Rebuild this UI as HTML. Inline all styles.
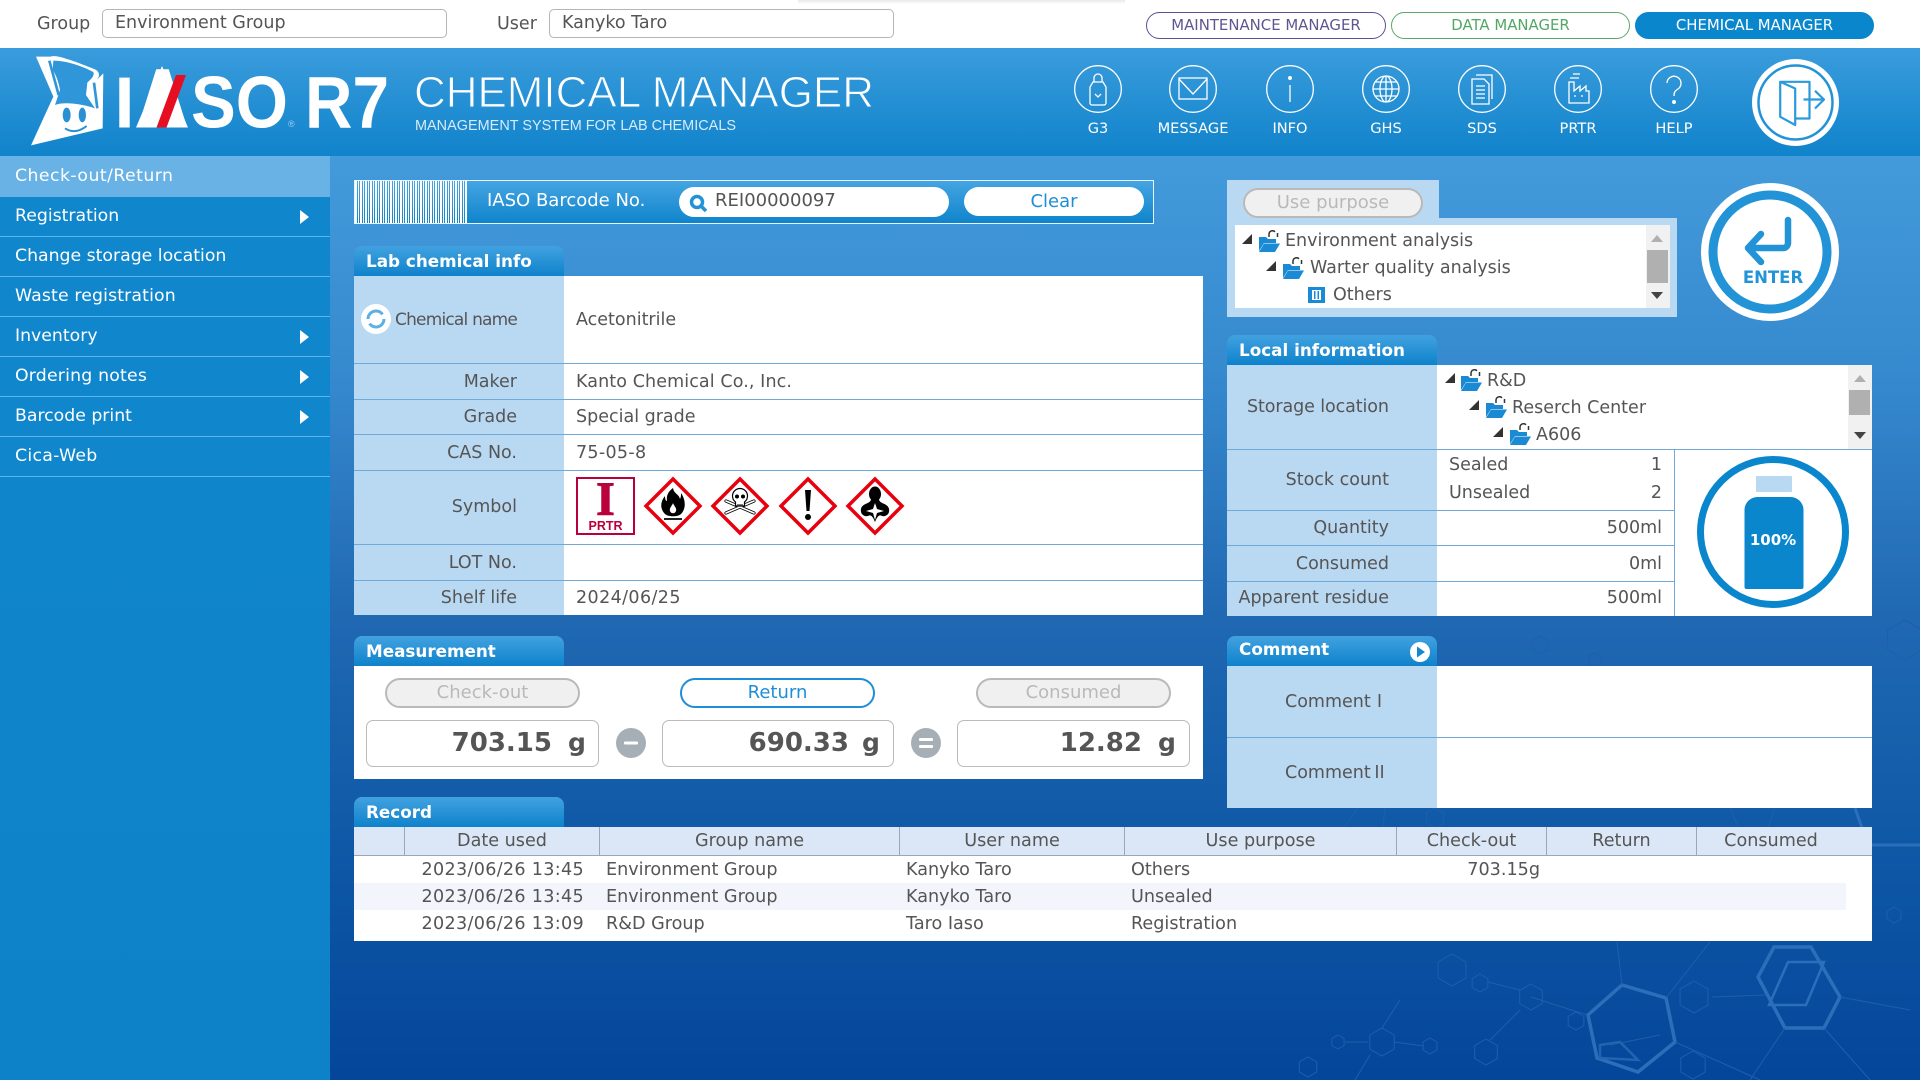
<!DOCTYPE html>
<html lang="en">
<head>
<meta charset="utf-8">
<title>IASO R7 Chemical Manager</title>
<style>
html,body{margin:0;padding:0;width:1920px;height:1080px;overflow:hidden;background:#fff}
body{position:relative;font-family:"DejaVu Sans","Liberation Sans","Noto Sans CJK JP",sans-serif;font-size:17.500px;color:#555}
div,span,svg{box-sizing:border-box}
.a{position:absolute}
.t{position:absolute;white-space:nowrap;line-height:30px;height:30px;margin-top:1px}
.r{text-align:right}
.c{text-align:center}
.inp{position:absolute;background:#fff;border:1px solid #b5b5b5;border-radius:5px}
.pill{position:absolute;border-radius:14px;text-align:center;font-size:14.900px;line-height:25px;height:27px;border:1px solid}
.hi{position:absolute;top:65px;width:48px;height:48px}
.hl{position:absolute;top:119px;width:100px;text-align:center;color:#fff;font-size:14.600px;line-height:20px}
.m{position:absolute;left:0;width:330px;height:40px;background:#1087cd;border-bottom:1px solid #5ab5ee;color:#fff;font-size:17.300px;line-height:38px;padding-left:15px;white-space:nowrap}
.ar{position:absolute;left:300px;width:0;height:0;border-left:9px solid #fff;border-top:7px solid transparent;border-bottom:7px solid transparent}
.tab{position:absolute;height:30px;border-radius:8px 8px 0 0;background:linear-gradient(#42a2e0,#0e82cb);color:#fff;font-weight:700;font-size:16.800px;line-height:30px;padding-left:12px;white-space:nowrap}
.lab{position:absolute;background:#b9d8f2}
.wh{position:absolute;background:#fff}
.ln{position:absolute;height:1px;background:#6ea9da}
.vl{position:absolute;width:1px;background:#6ea9da}
.btn{position:absolute;height:30px;border-radius:15px;text-align:center;line-height:26px;border:2px solid #b9b9b9;background:#f0f0f0;color:#b9b9b9;font-size:18px}
.val{position:absolute;top:720px;height:47px;background:#fff;border:1px solid #bbb;border-radius:7px}
.big{position:absolute;top:728px;font-weight:700;font-size:26px;line-height:30px;color:#555;white-space:nowrap}
.th{position:absolute;top:827px;height:28px;line-height:28px;text-align:center;color:#555;font-size:17.600px;white-space:nowrap}
.sep{position:absolute;top:827px;height:28px;width:1px;background:#9aa7b5}
.td{position:absolute;height:27px;line-height:27px;color:#555;font-size:17.600px;white-space:nowrap;margin-top:1px}
.dt{letter-spacing:.3px}
.up{position:absolute;width:0;height:0;border-left:6px solid transparent;border-right:6px solid transparent;border-bottom:7px solid #b0b0b0}
.dn{position:absolute;width:0;height:0;border-left:6px solid transparent;border-right:6px solid transparent;border-top:7px solid #444}
.tri{position:absolute;width:0;height:0;border-bottom:10px solid #333;border-left:10px solid transparent}
.rn{font-family:"Noto Sans CJK JP",sans-serif}
</style>
</head>
<body>
<svg width="0" height="0" style="position:absolute">
  <defs>
    <symbol id="fo" viewBox="0 0 22 22">
      <path d="M1 7h7l2 2h8v4H6L1 21z" fill="#1a8ad4"/>
      <path d="M6 13.500H22L17 22H1z" fill="#1a8ad4"/>
      <path d="M11 7V4a3.500 3.500 0 0 1 6-2.200M19.500 3v4" fill="none" stroke="#333" stroke-width="1.500"/>
    </symbol>
    <polygon id="hx" points="0,-10 8.700,-5 8.700,5 0,10 -8.700,5 -8.700,-5" vector-effect="non-scaling-stroke"/>
  </defs>
</svg>

<!-- main background -->
<div class="a" style="left:0;top:156px;width:1920px;height:924px;background:linear-gradient(#439bdb 0%,#3588cd 25%,#2068b2 50%,#105aa8 72%,#04469a 100%)"></div>

<!-- molecules -->
<svg class="a" style="left:0;top:0" width="1920" height="1080" fill="none" stroke="#2b6fba">
  <g stroke-width="3.500">
    <polygon points="1622,985 1666,998 1675,1042 1638,1072 1597,1058 1588,1015"/>
    <polygon points="1774,947 1811,947 1840,997 1824,1028 1785,1028 1758,977"/>
  </g>
  <g stroke-width="2.500">
    <polygon points="1788,962 1824,962 1806,1005 1769,1005"/>
    <polygon points="1600,1045 1620,1042 1638,1060 1600,1058" stroke="#2463b0"/>
  </g>
  <g stroke-width="1" stroke="#1f5fac">
    <path d="M1622 985L1617 942M1666 998L1710 942M1531 997L1587 1015M1488 982L1520 990M1712 997L1765 995M1840 997L1910 1010M1785 1028L1750 1080M1824 1028L1870 1080M1675 1042L1760 1080M1520 1010L1490 1040M1394 1042L1424 1046M1382 1028L1400 1000M1370 1055L1355 1080M1368 1042L1345 1042M1345 827L1358 808M1385 808L1383 827M1730 808L1738 827M1775 808L1768 827M1610 1045L1660 1035"/>
    <path d="M1855 808L1868 845H1920" stroke-width="3" stroke="#2b6fba"/>
    <use href="#hx" transform="translate(1452 970) scale(1.600)"/>
    <use href="#hx" transform="translate(1480 983) scale(.9)"/>
    <use href="#hx" transform="translate(1531 997) scale(1.300)"/>
    <use href="#hx" transform="translate(1694 997) scale(1.600)"/>
    <use href="#hx" transform="translate(1576 1021) scale(.9)"/>
    <use href="#hx" transform="translate(1486 1052) scale(1.300)"/>
    <use href="#hx" transform="translate(1382 1042) scale(1.400)"/>
    <use href="#hx" transform="translate(1430 1046) scale(.8)"/>
    <use href="#hx" transform="translate(1338 1042) scale(.7)"/>
    <use href="#hx" transform="translate(1308 1067) scale(1)"/>
    <use href="#hx" transform="translate(1693 1065) scale(1.400)"/>
    <use href="#hx" transform="translate(1894 915) scale(.8)"/>
    <use href="#hx" transform="translate(1435 818) scale(1)"/>
    <use href="#hx" transform="translate(1540 645) scale(.9)"/>
    <use href="#hx" transform="translate(1595 660) scale(.7)"/>
    <use href="#hx" transform="translate(1905 640) scale(2)"/>
  </g>
</svg>

<!-- top bar -->
<div class="a" style="left:798px;top:0;width:327px;height:4px;background:linear-gradient(#e8e8e8,#fff)"></div>
<div class="t" style="left:37px;top:8px">Group</div>
<div class="inp" style="left:102px;top:9px;width:345px;height:29px"></div>
<div class="t" style="left:115px;top:7px">Environment Group</div>
<div class="t" style="left:497px;top:8px">User</div>
<div class="inp" style="left:549px;top:9px;width:345px;height:29px"></div>
<div class="t" style="left:562px;top:7px">Kanyko Taro</div>
<div class="pill" style="left:1146px;top:12px;width:240px;border-color:#5c4f92;color:#5f5590">MAINTENANCE MANAGER</div>
<div class="pill" style="left:1391px;top:12px;width:239px;border-color:#5aa86a;color:#52a763">DATA MANAGER</div>
<div class="pill" style="left:1635px;top:12px;width:239px;border-color:#0986cc;background:#0986cc;color:#fff">CHEMICAL MANAGER</div>

<!-- header -->
<div class="a" style="left:0;top:48px;width:1920px;height:108px;background:linear-gradient(#3a9cdc,#1083cb)"></div>
<svg class="a" style="left:0;top:0" width="900" height="160">
  <g transform="translate(0 40) scale(.3333)">
    <path fill="#fff" d="M108 50L152 50C165 45 190 50 285 88C300 95 300 110 290 120L310 100L308 265L93 316L160 170Z"/>
    <path fill="#2f96d9" d="M160 62C200 62 250 80 280 96C285 108 272 118 262 128L258 165L285 205C240 190 190 185 165 195L180 150C175 120 165 100 158 90Z"/>
    <path d="M148 62L176 165M282 128L292 205" stroke="#2f96d9" stroke-width="8" fill="none"/>
    <ellipse cx="200" cy="225" rx="12" ry="22" fill="#2a90d4"/>
    <ellipse cx="247" cy="225" rx="11" ry="22" fill="#2a90d4"/>
    <path d="M195 265Q225 285 260 258" stroke="#2a90d4" stroke-width="6" fill="none"/>
  </g>
  <polygon points="162,66 188,127.500 136,127.500" fill="#fff"/>
  <g fill="#fff" font-family="'Liberation Sans',sans-serif" font-weight="700">
    <text x="114.500" y="127.500" font-size="72" textLength="20" lengthAdjust="spacingAndGlyphs">I</text>
    <text x="136" y="127.500" font-size="84" textLength="53" lengthAdjust="spacingAndGlyphs">A</text>
    <text x="191" y="127.500" font-size="73" textLength="97" lengthAdjust="spacingAndGlyphs">SO</text>
    <text x="305" y="127.500" font-size="73" textLength="84" lengthAdjust="spacingAndGlyphs">R7</text>
    <text x="288" y="127" font-size="9" font-weight="400" fill="#9ed0ef">®</text>
  </g>
  <polygon points="176,75 186,75 166.500,127.500 156.500,127.500" fill="#e60f22"/>
  <text x="414" y="107" font-family="'Liberation Sans',sans-serif" font-size="44" fill="#fff" stroke="#2b94d7" stroke-width="1" textLength="460" lengthAdjust="spacingAndGlyphs">CHEMICAL MANAGER</text>
  <text x="415" y="130" font-family="'Liberation Sans',sans-serif" font-size="14.500" fill="#d7ecf9" textLength="321" lengthAdjust="spacingAndGlyphs">MANAGEMENT SYSTEM FOR LAB CHEMICALS</text>
</svg>

<!-- header icons -->
<svg class="hi" style="left:1074px" viewBox="0 0 48 48" fill="none" stroke="#fff" stroke-width="1.300"><circle cx="24" cy="24" r="23.300"/><path d="M20 17V13a4 4 0 0 1 8 0V17M19 17h10l3 5V38a2 2 0 0 1-2 2H18a2 2 0 0 1-2-2V22zM21 29l3 3 3-3"/></svg>
<svg class="hi" style="left:1169px" viewBox="0 0 48 48" fill="none" stroke="#fff" stroke-width="1.300"><circle cx="24" cy="24" r="23.300"/><rect x="10" y="13" width="28" height="21"/><path d="M10 14L24 29 38 14"/></svg>
<svg class="hi" style="left:1266px" viewBox="0 0 48 48" fill="none" stroke="#fff" stroke-width="1.300"><circle cx="24" cy="24" r="23.300"/><path d="M24 20V37"/><circle cx="24" cy="13" r="1.300" fill="#fff"/></svg>
<svg class="hi" style="left:1362px" viewBox="0 0 48 48" fill="none" stroke="#fff" stroke-width="1.300"><circle cx="24" cy="24" r="23.300"/><circle cx="24" cy="24" r="13"/><ellipse cx="24" cy="24" rx="6" ry="13"/><path d="M11 24h26M13.500 17h21M13.500 31h21M24 11v26"/></svg>
<svg class="hi" style="left:1458px" viewBox="0 0 48 48" fill="none" stroke="#fff" stroke-width="1.300"><circle cx="24" cy="24" r="23.300"/><path d="M18 10h16v24M14 14v25h17V19l-5-5zM14 14h12M18 21h9M18 25h9M18 29h9M18 33h9"/></svg>
<svg class="hi" style="left:1554px" viewBox="0 0 48 48" fill="none" stroke="#fff" stroke-width="1.300"><circle cx="24" cy="24" r="23.300"/><path d="M15 38V17h5v9l6-5v5l6-5v5l3 0V38zM16 13h9M19 9h7M20 31h2M27 31h2"/></svg>
<svg class="hi" style="left:1650px" viewBox="0 0 48 48" fill="none" stroke="#fff" stroke-width="1.300"><circle cx="24" cy="24" r="23.300"/><path d="M17 18a7 7 0 1 1 11 6c-3 2-4 3-4 7"/><circle cx="24" cy="37" r="1.300" fill="#fff"/></svg>
<div class="hl" style="left:1048px">G3</div>
<div class="hl" style="left:1143px">MESSAGE</div>
<div class="hl" style="left:1240px">INFO</div>
<div class="hl" style="left:1336px">GHS</div>
<div class="hl" style="left:1432px">SDS</div>
<div class="hl" style="left:1528px">PRTR</div>
<div class="hl" style="left:1624px">HELP</div>
<svg class="a" style="left:1752px;top:59px" width="87" height="87" viewBox="0 0 87 87">
  <circle cx="43.500" cy="43.500" r="43.500" fill="#fff"/>
  <circle cx="43.500" cy="43.500" r="37" fill="none" stroke="#2293d6" stroke-width="2.500"/>
  <g fill="none" stroke="#2a9ada" stroke-width="2.200" stroke-linejoin="round">
    <path d="M43 59.500H57.500V22.800H28.200V57.800L43.200 66V29.500L28.200 22.800M51.500 40.500H72M63 31.800L72 40.500 63 49.500"/>
  </g>
</svg>

<!-- sidebar -->
<div class="a" style="left:0;top:156px;width:330px;height:924px;background:linear-gradient(#1087cd,#0e82c8)"></div>
<div class="m" style="top:156px;height:41px;background:#68b2e6;border:0;line-height:40px;letter-spacing:.45px">Check-out/Return</div>
<div class="m" style="top:197px">Registration</div><div class="ar" style="top:210px"></div>
<div class="m" style="top:237px">Change storage location</div>
<div class="m" style="top:277px;letter-spacing:.15px">Waste registration</div>
<div class="m" style="top:317px">Inventory</div><div class="ar" style="top:330px"></div>
<div class="m" style="top:357px;letter-spacing:.2px">Ordering notes</div><div class="ar" style="top:370px"></div>
<div class="m" style="top:397px">Barcode print</div><div class="ar" style="top:410px"></div>
<div class="m" style="top:437px;letter-spacing:.3px">Cica-Web</div>

<!-- barcode -->
<div class="a" style="left:354px;top:180px;width:800px;height:44px;border:1px solid #e8f4fc;background:linear-gradient(#45a5e2,#0f84cc)"></div>
<div class="a" style="left:355px;top:181px;width:113px;height:42px;background:repeating-linear-gradient(90deg,#fff 0,#fff 2px,transparent 2px,transparent 3px,#fff 3px,#fff 4px,transparent 4px,transparent 5px,#fff 5px,#fff 7px,transparent 7px,transparent 8px,#fff 8px,#fff 9px,transparent 9px,transparent 10px)"></div>
<div class="t" style="left:487px;top:185px;color:#fff;font-size:18px">IASO Barcode No.</div>
<div class="a" style="left:679px;top:187px;width:270px;height:30px;background:#fff;border-radius:15px"></div>
<svg class="a" style="left:688px;top:193px" width="20" height="20" fill="none" stroke="#2293d6" stroke-width="3.500"><circle cx="9" cy="9" r="5.500"/><path d="M13 13l5 5"/></svg>
<div class="t" style="left:715px;top:185px;font-size:18px">REI00000097</div>
<div class="a" style="left:964px;top:187px;width:180px;height:29px;background:#fff;border-radius:15px;text-align:center;color:#1e8fd6;line-height:30px;font-size:18px">Clear</div>

<!-- Lab chemical info -->
<div class="tab" style="left:354px;top:246px;width:210px">Lab chemical info</div>
<div class="lab" style="left:354px;top:276px;width:210px;height:339px"></div>
<div class="wh" style="left:564px;top:276px;width:639px;height:339px"></div>
<div class="ln" style="left:354px;top:363px;width:849px"></div>
<div class="ln" style="left:354px;top:399px;width:849px"></div>
<div class="ln" style="left:354px;top:434px;width:849px"></div>
<div class="ln" style="left:354px;top:470px;width:849px"></div>
<div class="ln" style="left:354px;top:544px;width:849px"></div>
<div class="ln" style="left:354px;top:580px;width:849px"></div>
<svg class="a" style="left:361px;top:304px" width="30" height="30"><circle cx="15" cy="15" r="15" fill="#fff"/><circle cx="15" cy="15" r="8" fill="none" stroke="#5cb0e4" stroke-width="3" stroke-dasharray="20 5"/></svg>
<div class="t" style="left:395px;top:304px;font-size:17px;letter-spacing:-.8px">Chemical name</div>
<div class="t r" style="right:1403px;top:366px">Maker</div>
<div class="t r" style="right:1403px;top:401px">Grade</div>
<div class="t r" style="right:1403px;top:437px">CAS No.</div>
<div class="t r" style="right:1403px;top:491px">Symbol</div>
<div class="t r" style="right:1403px;top:547px">LOT No.</div>
<div class="t r" style="right:1403px;top:582px">Shelf life</div>
<div class="t" style="left:576px;top:304px">Acetonitrile</div>
<div class="t" style="left:576px;top:366px;letter-spacing:.1px">Kanto Chemical Co., Inc.</div>
<div class="t" style="left:576px;top:401px">Special grade</div>
<div class="t" style="left:576px;top:437px;letter-spacing:.3px">75-05-8</div>
<div class="t" style="left:576px;top:582px;letter-spacing:.4px">2024/06/25</div>

<!-- symbols -->
<div class="a" style="left:576px;top:477px;width:59px;height:58px;border:2.500px solid #b9003c;background:#fff"></div>
<div class="a" style="left:576px;top:480px;width:59px;text-align:center;font-family:'Liberation Serif',serif;font-weight:700;font-size:48px;line-height:40px;color:#b9003c;-webkit-text-stroke:1px #b9003c">I</div>
<div class="a" style="left:576px;top:519px;width:59px;text-align:center;font-family:'Liberation Sans',sans-serif;font-weight:700;font-size:12.500px;line-height:14px;color:#b9003c">PRTR</div>
<svg class="a" style="left:643px;top:476px" width="60" height="60" viewBox="0 0 60 60">
  <polygon points="30,3 57,30 30,57 3,30" fill="#fff" stroke="#e8000f" stroke-width="3.500"/>
  <path d="M30 12C31 18 36 18 37 23C38 21 38 20 38 17C43 24 43 33 38 38C35 41 25 41 22 38C17 33 17 26 22 20C22 24 23 25 24 25C23 19 26 15 30 12Z" fill="#000"/>
  <path d="M30 27C31 30 34 32 33 35C32 38 28 38 27 35C26 32 29 30 30 27Z" fill="#fff"/>
  <path d="M21 43h18" stroke="#000" stroke-width="1.800"/>
</svg>
<svg class="a" style="left:710px;top:476px" width="60" height="60" viewBox="0 0 60 60">
  <polygon points="30,3 57,30 30,57 3,30" fill="#fff" stroke="#e8000f" stroke-width="3.500"/>
  <path d="M16 25L44 37M44 25L16 37" stroke="#000" stroke-width="3.200" stroke-linecap="round"/>
  <path d="M16 25L44 37M44 25L16 37" stroke="#fff" stroke-width="1.600" stroke-linecap="round"/>
  <path d="M22.500 20a7.500 7.500 0 1 1 15 0c0 4-2 5-3 6v4h-9v-4c-1-1-3-2-3-6z" fill="#fff" stroke="#000" stroke-width="1.200"/>
  <circle cx="27" cy="20.500" r="2" fill="#000"/><circle cx="33" cy="20.500" r="2" fill="#000"/>
  <path d="M28 28v2M30 28v2M32 28v2" stroke="#000"/>
</svg>
<svg class="a" style="left:778px;top:476px" width="60" height="60" viewBox="0 0 60 60">
  <polygon points="30,3 57,30 30,57 3,30" fill="#fff" stroke="#e8000f" stroke-width="3.500"/>
  <path d="M27 14h6l-1.500 21h-3z" fill="#000"/><circle cx="30" cy="41" r="3" fill="#000"/>
</svg>
<svg class="a" style="left:845px;top:476px" width="60" height="60" viewBox="0 0 60 60">
  <polygon points="30,3 57,30 30,57 3,30" fill="#fff" stroke="#e8000f" stroke-width="3.500"/>
  <ellipse cx="30" cy="18" rx="6" ry="7.500" fill="#000"/>
  <path d="M26 23C26 28 17 27 16 33C15 38 19 41 23 40C26 38 28 41 30 46C32 41 34 38 37 40C41 41 45 38 44 33C43 27 34 28 34 23Z" fill="#000"/>
  <path d="M30 27l2 6 7 2-7 2-2 7-2-7-7-2 7-2z" fill="#fff"/>
</svg>

<!-- Measurement -->
<div class="tab" style="left:354px;top:636px;width:210px">Measurement</div>
<div class="wh" style="left:354px;top:666px;width:849px;height:113px"></div>
<div class="btn" style="left:385px;top:678px;width:195px">Check-out</div>
<div class="btn" style="left:680px;top:678px;width:195px;background:#fff;border-color:#1e8fd6;color:#1e8fd6">Return</div>
<div class="btn" style="left:976px;top:678px;width:195px">Consumed</div>
<div class="val" style="left:366px;width:233px"></div>
<div class="val" style="left:662px;width:232px"></div>
<div class="val" style="left:957px;width:233px"></div>
<div class="big r" style="right:1368px">703.15</div><div class="big" style="left:568px;font-size:25px">g</div>
<div class="big r" style="right:1071px">690.33</div><div class="big" style="left:862px;font-size:25px">g</div>
<div class="big r" style="right:778px">12.82</div><div class="big" style="left:1158px;font-size:25px">g</div>
<svg class="a" style="left:616px;top:728px" width="30" height="30"><circle cx="15" cy="15" r="15" fill="#a7afb6"/><rect x="8" y="13.500" width="14" height="3" rx="1" fill="#fff"/></svg>
<svg class="a" style="left:911px;top:728px" width="30" height="30"><circle cx="15" cy="15" r="15" fill="#a7afb6"/><rect x="8" y="10" width="14" height="3" rx="1" fill="#fff"/><rect x="8" y="17" width="14" height="3" rx="1" fill="#fff"/></svg>

<!-- Use purpose -->
<div class="a" style="left:1227px;top:180px;width:212px;height:40px;background:#b9d8f2"></div>
<div class="a" style="left:1227px;top:218px;width:450px;height:99px;background:#b9d8f2"></div>
<div class="btn" style="left:1243px;top:188px;width:180px">Use purpose</div>
<div class="wh" style="left:1235px;top:225px;width:435px;height:83px"></div>
<div class="a" style="left:1646px;top:225px;width:24px;height:83px;background:#f1f1f1"></div>
<div class="a" style="left:1647px;top:250px;width:21px;height:33px;background:#b0b0b0"></div>
<div class="up" style="left:1651px;top:235px"></div>
<div class="dn" style="left:1651px;top:292px"></div>
<div class="tri" style="left:1242px;top:234px"></div>
<svg class="a" style="left:1258px;top:230px" width="22" height="22"><use href="#fo"/></svg>
<div class="t" style="left:1285px;top:225px">Environment analysis</div>
<div class="tri" style="left:1266px;top:261px"></div>
<svg class="a" style="left:1282px;top:257px" width="22" height="22"><use href="#fo"/></svg>
<div class="t" style="left:1310px;top:252px">Warter quality analysis</div>
<div class="a" style="left:1308px;top:287px;width:17px;height:16px;background:#1a8ad4;color:#fff"></div>
<div class="a" style="left:1312px;top:290px;width:9px;height:10px;border-top:1.500px solid #fff;border-bottom:1.500px solid #fff;background:repeating-linear-gradient(90deg,#fff 0,#fff 2px,transparent 2px,transparent 3.500px)"></div>
<div class="t" style="left:1333px;top:279px">Others</div>

<!-- Enter -->
<svg class="a" style="left:1701px;top:183px" width="138" height="138" viewBox="0 0 138 138">
  <circle cx="69" cy="69" r="69" fill="#fff"/>
  <circle cx="69" cy="69" r="57" fill="#fff" stroke="#2293d6" stroke-width="9"/>
  <path d="M87 37V60a5 5 0 0 1-5 5H52" fill="none" stroke="#2293d6" stroke-width="6.500" stroke-linecap="round"/>
  <path d="M60 51L47 65 60 79" fill="none" stroke="#2293d6" stroke-width="6.500" stroke-linecap="round" stroke-linejoin="round"/>
</svg>
<div class="a c" style="left:1723px;top:267px;width:100px;color:#2293d6;font-weight:700;font-size:16.500px;line-height:22px">ENTER</div>

<!-- Local information -->
<div class="tab" style="left:1227px;top:335px;width:210px">Local information</div>
<div class="lab" style="left:1227px;top:365px;width:210px;height:251px"></div>
<div class="wh" style="left:1437px;top:365px;width:435px;height:251px"></div>
<div class="ln" style="left:1227px;top:449px;width:645px"></div>
<div class="ln" style="left:1227px;top:510px;width:448px"></div>
<div class="ln" style="left:1227px;top:545px;width:448px"></div>
<div class="ln" style="left:1227px;top:581px;width:448px"></div>
<div class="vl" style="left:1674px;top:449px;height:167px"></div>
<div class="a" style="left:1848px;top:365px;width:24px;height:84px;background:#f1f1f1"></div>
<div class="a" style="left:1849px;top:390px;width:21px;height:25px;background:#b0b0b0"></div>
<div class="up" style="left:1854px;top:375px"></div>
<div class="dn" style="left:1854px;top:432px"></div>
<div class="tri" style="left:1445px;top:373px"></div>
<svg class="a" style="left:1460px;top:369px" width="22" height="22"><use href="#fo"/></svg>
<div class="t" style="left:1487px;top:365px">R&amp;D</div>
<div class="tri" style="left:1469px;top:400px"></div>
<svg class="a" style="left:1485px;top:396px" width="22" height="22"><use href="#fo"/></svg>
<div class="t" style="left:1512px;top:392px">Reserch Center</div>
<div class="tri" style="left:1493px;top:427px"></div>
<svg class="a" style="left:1509px;top:423px" width="22" height="22"><use href="#fo"/></svg>
<div class="t" style="left:1536px;top:419px">A606</div>
<div class="t" style="left:1247px;top:391px;letter-spacing:-.1px">Storage location</div>
<div class="t r" style="right:531px;top:464px">Stock count</div>
<div class="t r" style="right:531px;top:512px">Quantity</div>
<div class="t r" style="right:531px;top:548px">Consumed</div>
<div class="t r" style="right:531px;top:582px">Apparent residue</div>
<div class="t" style="left:1449px;top:449px">Sealed</div>
<div class="t r" style="right:258px;top:449px">1</div>
<div class="t" style="left:1449px;top:477px">Unsealed</div>
<div class="t r" style="right:258px;top:477px">2</div>
<div class="t r" style="right:258px;top:512px">500ml</div>
<div class="t r" style="right:258px;top:548px">0ml</div>
<div class="t r" style="right:258px;top:582px">500ml</div>
<svg class="a" style="left:1697px;top:456px" width="152" height="152" viewBox="0 0 152 152">
  <circle cx="76" cy="76" r="72.500" fill="#fff" stroke="#0986cc" stroke-width="7"/>
  <rect x="59" y="20" width="36" height="16" rx="1" fill="#b9d8f2"/>
  <path d="M47.500 54a13 13 0 0 1 13-13h33a13 13 0 0 1 13 13v77a2 2 0 0 1-2 2h-55a2 2 0 0 1-2-2z" fill="#0986cc"/>
</svg>
<div class="a c" style="left:1723px;top:529px;width:100px;color:#fff;font-weight:700;font-size:15px;line-height:22px">100%</div>

<!-- Comment -->
<div class="tab" style="left:1227px;top:636px;width:210px;line-height:27px">Comment</div>
<svg class="a" style="left:1410px;top:642px" width="20" height="20"><circle cx="10" cy="10" r="10" fill="#fff"/><path d="M7 4.500L15 10 7 15.500z" fill="#1587cf"/></svg>
<div class="lab" style="left:1227px;top:666px;width:210px;height:142px"></div>
<div class="wh" style="left:1437px;top:666px;width:435px;height:142px"></div>
<div class="ln" style="left:1227px;top:737px;width:645px"></div>
<div class="t" style="left:1285px;top:685px">Comment<span class="rn">Ⅰ</span></div>
<div class="t" style="left:1285px;top:756px">Comment<span class="rn">Ⅱ</span></div>

<!-- Record -->
<div class="tab" style="left:354px;top:797px;width:210px">Record</div>
<div class="wh" style="left:354px;top:827px;width:1518px;height:114px"></div>
<div class="a" style="left:354px;top:827px;width:1518px;height:29px;background:#dbe7f6;border-bottom:1px solid #9aa7b5"></div>
<div class="a" style="left:354px;top:883px;width:1492px;height:27px;background:#f2f6fc"></div>
<div class="sep" style="left:404px"></div><div class="sep" style="left:599px"></div><div class="sep" style="left:899px"></div><div class="sep" style="left:1124px"></div><div class="sep" style="left:1396px"></div><div class="sep" style="left:1546px"></div><div class="sep" style="left:1696px"></div>
<div class="th" style="left:405px;width:194px">Date used</div>
<div class="th" style="left:600px;width:299px">Group name</div>
<div class="th" style="left:900px;width:224px">User name</div>
<div class="th" style="left:1125px;width:271px">Use purpose</div>
<div class="th" style="left:1397px;width:149px">Check-out</div>
<div class="th" style="left:1547px;width:149px">Return</div>
<div class="th" style="left:1697px;width:148px">Consumed</div>
<div class="td r dt" style="right:1336px;top:856px">2023/06/26 13:45</div>
<div class="td" style="left:606px;top:856px">Environment Group</div>
<div class="td" style="left:906px;top:856px">Kanyko Taro</div>
<div class="td" style="left:1131px;top:856px">Others</div>
<div class="td r" style="right:380px;top:856px">703.15g</div>
<div class="td r dt" style="right:1336px;top:883px">2023/06/26 13:45</div>
<div class="td" style="left:606px;top:883px">Environment Group</div>
<div class="td" style="left:906px;top:883px">Kanyko Taro</div>
<div class="td" style="left:1131px;top:883px">Unsealed</div>
<div class="td r dt" style="right:1336px;top:910px">2023/06/26 13:09</div>
<div class="td" style="left:606px;top:910px">R&amp;D Group</div>
<div class="td" style="left:906px;top:910px">Taro Iaso</div>
<div class="td" style="left:1131px;top:910px">Registration</div>
</body>
</html>
